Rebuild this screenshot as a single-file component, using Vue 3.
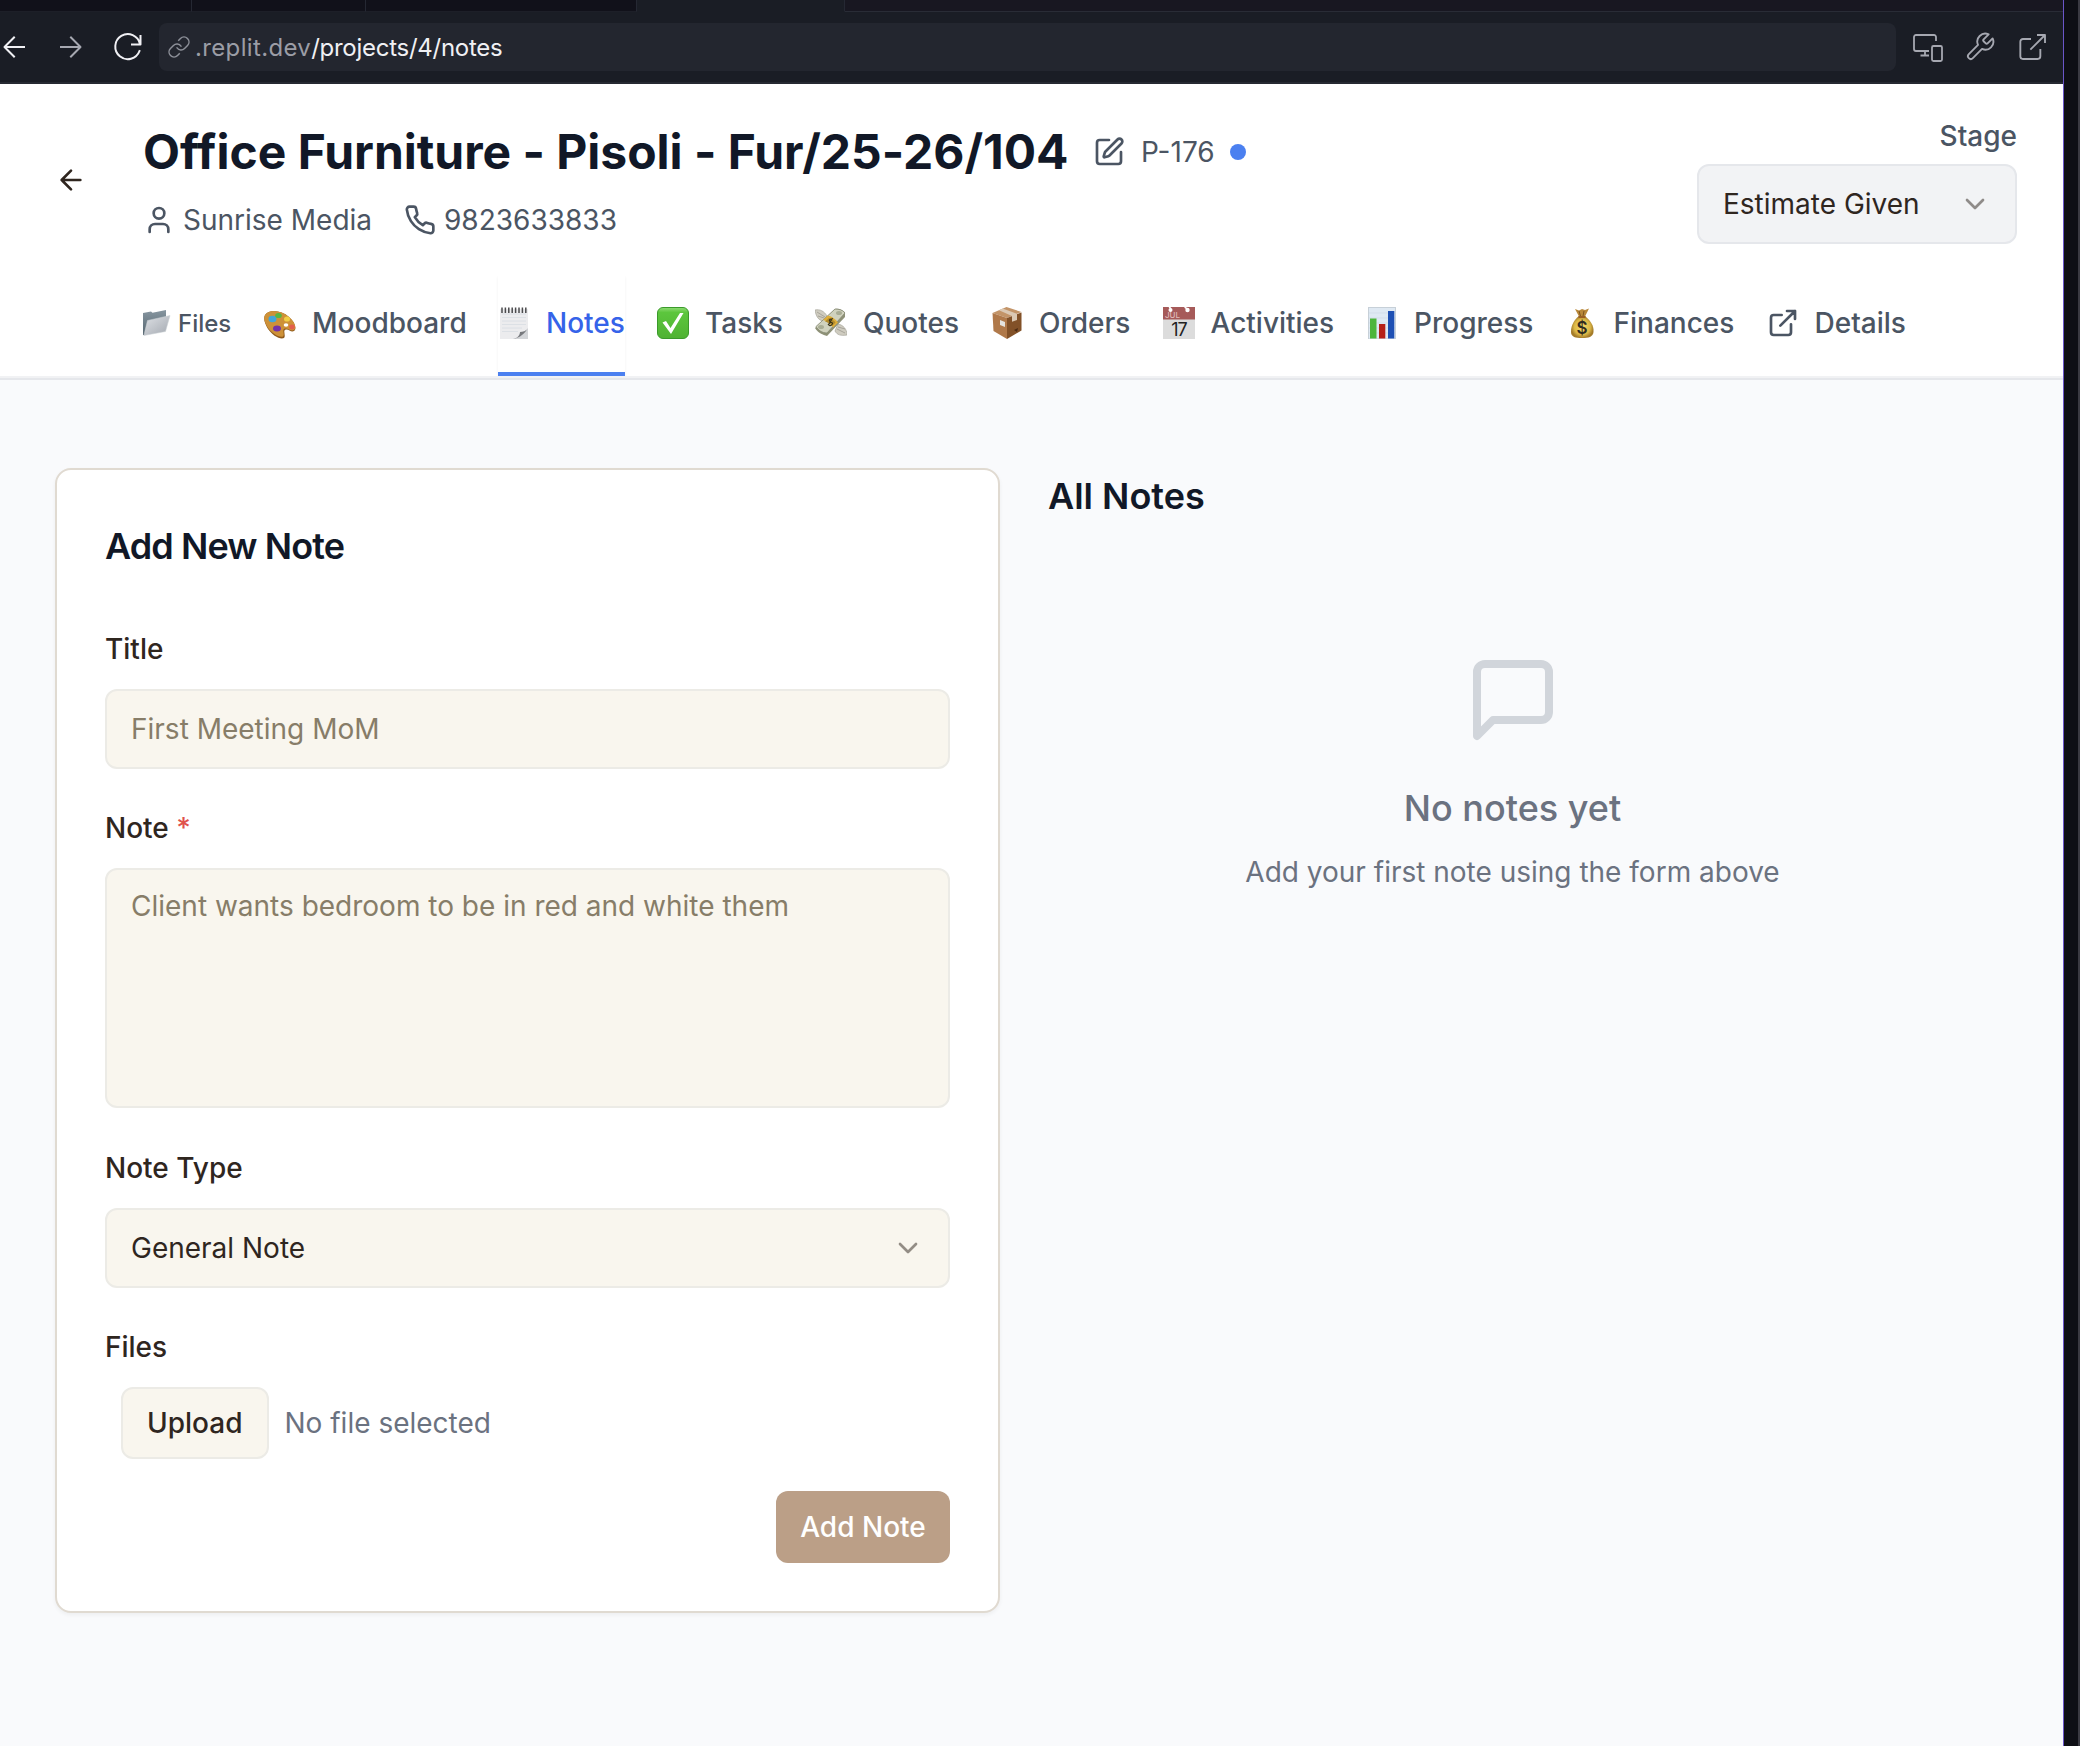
<script setup>
import { ref } from 'vue'

const browserTabs = [192, 174, 271]
const tabs = [
  { id: 'moodboard', label: 'Moodboard', width: 154 },
  { id: 'notes', label: 'Notes', width: 79 },
  { id: 'tasks', label: 'Tasks', width: 78 },
  { id: 'quotes', label: 'Quotes', width: 96 },
  { id: 'orders', label: 'Orders', width: 91.5 },
  { id: 'activities', label: 'Activities', width: 123.5 },
  { id: 'progress', label: 'Progress', width: 119.5 },
  { id: 'finances', label: 'Finances', width: 121 },
  { id: 'details', label: 'Details', width: 92 }
]
const active = ref('notes')
const title = ref('')
const note = ref('')
</script>

<template>
  <div class="screen">
    <div class="pane">
      <div class="strip">
        <div v-for="(w, i) in browserTabs" :key="i" class="strip-tab" :style="{ width: w + 'px' }"></div>
        <div class="strip-tab current"></div>
        <div class="strip-rest"></div>
      </div>
      <div class="toolbar">
        <svg class="nav-back" viewBox="0 0 32 32"><path d="M26 16H7M16 6.500L6.500 16l9.500 9.500" /></svg>
        <svg class="nav-fwd" viewBox="0 0 32 32"><path d="M6 16h19M16 6.500l9.500 9.500-9.500 9.500" /></svg>
        <svg class="nav-reload" viewBox="0 0 32 32"><path d="M28.500 5v8.500h-8.500M28 13A12.500 12.500 0 1 0 27.500 20" /></svg>
        <div class="url">
          <svg viewBox="0 0 24 24"><path d="M10 13a5 5 0 0 0 7.540.540l3-3a5 5 0 0 0-7.070-7.070l-1.720 1.710M14 11a5 5 0 0 0-7.540-.540l-3 3a5 5 0 0 0 7.070 7.070l1.710-1.710" /></svg>
          <span class="url-text"><span class="host">.replit.dev</span>/projects/4/notes</span>
        </div>
        <div class="tools">
          <svg viewBox="0 0 32 32"><path d="M25 10V6a2 2 0 0 0-2-2H5a2 2 0 0 0-2 2v12a2 2 0 0 0 2 2h13M14 20v4M9.500 24.500H18" /><rect x="21" y="15" width="10" height="15" rx="1.500" /></svg>
          <svg viewBox="0 0 24 24"><path d="M14.700 6.300a1 1 0 0 0 0 1.400l1.600 1.600a1 1 0 0 0 1.400 0l3.770-3.770a6 6 0 0 1-7.940 7.940l-6.910 6.910a2.120 2.120 0 0 1-3-3l6.910-6.910a6 6 0 0 1 7.940-7.940l-3.760 3.760z" /></svg>
          <svg viewBox="0 0 24 24"><path d="M15 3h6v6M10 14 21 3M17.500 13.500v5.500a2 2 0 0 1-2 2h-11a2 2 0 0 1-2-2V8a2 2 0 0 1 2-2h6" /></svg>
        </div>
      </div>

      <header class="header">
        <div class="head-row">
          <svg class="ic back" viewBox="0 0 24 24"><path d="m12 19-7-7 7-7M19 12H5" /></svg>
          <div class="head-main">
            <div class="title-row">
              <h1>Office Furniture - Pisoli - Fur/25-26/104</h1>
              <svg class="ic" viewBox="0 0 24 24"><path d="M12 3H5a2 2 0 0 0-2 2v14a2 2 0 0 0 2 2h14a2 2 0 0 0 2-2v-7" /><path d="M18.375 2.625a1 1 0 0 1 3 3l-9.013 9.014a2 2 0 0 1-.853.505l-2.873.840a.500.500 0 0 1-.620-.620l.840-2.873a2 2 0 0 1 .506-.852z" /></svg>
              <span class="code">P-176</span>
              <i class="dot"></i>
            </div>
            <div class="meta">
              <svg class="ic" viewBox="0 0 24 24"><path d="M19 21v-2a4 4 0 0 0-4-4H9a4 4 0 0 0-4 4v2" /><circle cx="12" cy="7" r="4" /></svg>
              <span class="client">Sunrise Media</span>
              <svg class="ic" viewBox="0 0 24 24"><path d="M22 16.920v3a2 2 0 0 1-2.180 2 19.790 19.790 0 0 1-8.630-3.070 19.500 19.500 0 0 1-6-6 19.790 19.790 0 0 1-3.070-8.670A2 2 0 0 1 4.110 2h3a2 2 0 0 1 2 1.720 12.840 12.840 0 0 0 .7 2.810 2 2 0 0 1-.450 2.110L8.090 9.910a16 16 0 0 0 6 6l1.270-1.270a2 2 0 0 1 2.110-.450 12.840 12.840 0 0 0 2.810.7A2 2 0 0 1 22 16.920z" /></svg>
              <span class="phone">9823633833</span>
            </div>
          </div>
          <div class="stage">
            <span class="stage-label">Stage</span>
            <div class="select stage-select">
              <span>Estimate Given</span>
              <svg class="ic chev" viewBox="0 0 24 24"><path d="m6 9 6 6 6-6" /></svg>
            </div>
          </div>
        </div>

        <nav class="tabs">
          <a class="files">
            <svg viewBox="0 0 28 28">
              <defs>
                <linearGradient id="fb" x2="0" y2="1"><stop stop-color="#8796a0" /><stop offset="1" stop-color="#566670" /></linearGradient>
                <linearGradient id="ff" x1="0" y1="0" x2="1" y2="1"><stop stop-color="#dfe2e6" /><stop offset="1" stop-color="#a3a8b0" /></linearGradient>
              </defs>
              <path d="M0 4 8 2.500l1.500 1.200L23 1v11L2 26H0z" fill="url(#fb)" />
              <path d="M4.500 11.500 27 6.500 22.500 22.500 .8 26.500z" fill="url(#ff)" stroke="#c9ced3" stroke-width=".5" />
            </svg>
            <span>Files</span>
          </a>
          <a v-for="t in tabs" :key="t.id" class="tab" :class="{ on: t.id === active }" @click="active = t.id">
            <svg v-if="t.id === 'moodboard'" viewBox="0 0 32 32">
              <path d="M1 8C5 2 17 3 25 10c6 5 8 12 5 14-3 2-6-3-9-1-2 1 1 6-1 8-4 2-12-3-16-9C1 17-1 12 1 8z" fill="#8f5a1c" />
              <path d="M1 8C5 2 17 3 25 10c6 5 8 11 5 13-3 2-7-3-10-1-2 1 1 6-1 7.500C15 31 8 26 4 21 1 16-1 12 1 8z" fill="#cd9138" />
              <ellipse cx="8.500" cy="12" rx="4" ry="3.300" fill="#42a5d8" /><ellipse cx="14.500" cy="8.500" rx="3.300" ry="2.600" fill="#54b743" /><ellipse cx="23" cy="12" rx="3" ry="2.600" fill="#f1cf46" /><ellipse cx="28" cy="20" rx="2.800" ry="2.400" fill="#e35f4c" /><ellipse cx="13" cy="21.500" rx="4" ry="3" fill="#7431a8" /><ellipse cx="22" cy="18" rx="2.300" ry="1.700" fill="#fff" />
            </svg>
            <svg v-else-if="t.id === 'notes'" viewBox="0 0 32 32">
              <path d="M2 2h28v19L20 32H2z" fill="#ececee" /><path d="M4 7h24M4 10.500h24M4 14h24M4 17.500h24M4 21h20M4 24.500h16" stroke="#d8dde2" stroke-width=".8" /><path d="M30 21v11H15c5-1 7-4 7-7 3 0 6-1 8-4z" fill="#d3d5d8" /><path d="M30 21c-2 3-5 4-8 4 0 3-2 6-7 7 7-1 12-6 15-11z" fill="#77797d" />
              <path d="M4 .5v5.500M7.400.5v5.500M10.800.5v5.500M14.200.5v5.500M17.600.5v5.500M21 .5v5.500M24.400.5v5.500M27.800.5v5.500" stroke="#4b4b4d" stroke-width="1.500" />
            </svg>
            <svg v-else-if="t.id === 'tasks'" viewBox="0 0 32 32">
              <defs><linearGradient id="gc" x2="0" y2="1"><stop stop-color="#8fdc74" /><stop offset=".16" stop-color="#5cc63d" /><stop offset="1" stop-color="#4fb233" /></linearGradient></defs>
              <rect x=".5" y=".5" width="31" height="31" rx="5.500" fill="url(#gc)" stroke="#3b9a2b" /><path d="M5.500 15.500 9 14l4.500 7L23 6h3.500L14 27z" fill="#fff" />
            </svg>
            <svg v-else-if="t.id === 'quotes'" viewBox="0 0 32 32">
              <path d="M0 3c5-1 9 1 12 6l-4 5C3 13 1 9 0 3zM32 28c-6 1-10 0-12-4l3-7c5 1 9 5 9 11z" fill="#cfccc0" stroke="#a5a398" stroke-width=".7" /><path d="M2 5l8 5M3 9l6 2M30 26l-8-4M30 22l-7-2" stroke="#96948a" stroke-width=".7" />
              <path d="M0 21 20 2c4-1 8 1 10 4v4L12 29C8 28 3 26 0 21z" fill="#8e9177" /><path d="M1 19.500 20 2c4 0 8 1 10 4L12 26C7 26 3 23 1 19.500z" fill="#d0d2be" stroke="#858972" stroke-width=".8" /><ellipse cx="24" cy="6" rx="3" ry="2" fill="#a9ad95" /><ellipse cx="6" cy="20" rx="3" ry="2" fill="#a9ad95" /><path d="m8 13 5-4.500c4 1 8 4 10 7l-5 5C16 17 12 14 8 13z" fill="#dfae38" /><path d="m10 14.500 4-3.500c3 1 5 2.500 6.500 4.500l-3.500 3.500c-2-2-4-3.500-7-4.500z" fill="#b08a2c" /><path d="M17 12.500c-2-1-3.500.5-2 2s3.500 1 2 3-3 1-4-.5M17.500 11l-4 7" stroke="#3b3415" stroke-width="1.200" fill="none" />
            </svg>
            <svg v-else-if="t.id === 'orders'" viewBox="0 0 32 32">
              <path d="m1.500 6 14-6 15 5L16 11z" fill="#c39468" /><path d="M1.500 6 16 11v21L2.500 24z" fill="#b0794a" /><path d="M16 11 30.500 5.500v18L16 32z" fill="#825128" /><path d="m8 3.200 3.500-1.600L26 6.800V13l-5 1.800V9z" fill="#dbc8b3" /><path d="m9 13 5 2v5l-5-2z" fill="#e5e3df" /><path d="m23 23 4-2-1 4z" fill="#4a2a12" />
            </svg>
            <svg v-else-if="t.id === 'activities'" viewBox="0 0 32 32">
              <rect width="32" height="32" fill="#dcdcdc" /><rect width="32" height="12.500" fill="#a65a59" /><path d="M6 0c2 1 1.500 1.500 1.500 2.500M22 0c0 1 2 1 2.500 2.500" stroke="#fff" stroke-width="1.500" fill="none" /><circle cx="7.500" cy="3" r="2" fill="#fff" /><circle cx="24.500" cy="3" r="2.200" fill="#fff" />
              <text x="2" y="10.500" class="cal-m">JUL</text><text x="16" y="29" text-anchor="middle" class="cal-d">17</text>
            </svg>
            <svg v-else-if="t.id === 'progress'" viewBox="0 0 32 32">
              <rect x="2.500" y=".5" width="27" height="31.500" fill="#dfe9f3" stroke="#c7d0d8" /><path d="M3 6h26M3 11h26M3 16h26M3 21h26M3 26h26" stroke="#ccd9e5" stroke-width=".6" /><rect x="4" y="11.500" width="6.500" height="20" fill="#4db53b" /><rect x="13" y="17" width="6.300" height="14.500" fill="#b62018" /><rect x="22" y="4" width="6.300" height="27.500" fill="#1e50b4" />
            </svg>
            <svg v-else-if="t.id === 'finances'" viewBox="0 0 32 32">
              <defs><radialGradient id="mb"><stop stop-color="#f5dc69" /><stop offset=".7" stop-color="#dcb847" /><stop offset="1" stop-color="#a47b29" /></radialGradient></defs>
              <path d="m9 2 4 1.500L16 2l3 1 4-1.500-4 8h-6z" fill="#b98839" /><path d="m13 4 1.500 5M18 4l-1 5" stroke="#7c5420" /><path d="M13 9h6c6 5 9 10 8.500 16-.5 5-5 6-11.500 6S5 30 5 25C5 18 8 13 13 9z" fill="url(#mb)" /><path d="M12.500 10h7" stroke="#9a5f24" stroke-width="2" />
              <text x="16" y="27" text-anchor="middle" class="bag">$</text>
            </svg>
            <svg v-else class="ic" viewBox="0 0 24 24"><path d="M15 3h6v6M10 14 21 3M18 13v6a2 2 0 0 1-2 2H5a2 2 0 0 1-2-2V8a2 2 0 0 1 2-2h6" /></svg>
            <span :style="{ width: t.width + 'px' }">{{ t.label }}</span>
          </a>
        </nav>
      </header>

      <main class="content">
        <form class="card" @submit.prevent>
          <h2>Add New Note</h2>
          <label>Title</label>
          <input v-model="title" class="field" placeholder="First Meeting MoM" />
          <label>Note <span class="req">*</span></label>
          <textarea v-model="note" class="field area" placeholder="Client wants bedroom to be in red and white them"></textarea>
          <label>Note Type</label>
          <div class="select field">
            <span>General Note</span>
            <svg class="ic chev" viewBox="0 0 24 24"><path d="m6 9 6 6 6-6" /></svg>
          </div>
          <label>Files</label>
          <div class="upload">
            <button type="button">Upload</button>
            <span>No file selected</span>
          </div>
          <button class="submit" type="submit">Add Note</button>
        </form>
        <section class="all">
          <h2>All Notes</h2>
          <div class="empty">
            <svg viewBox="0 0 24 24"><path d="M21 15a2 2 0 0 1-2 2H7l-4 4V5a2 2 0 0 1 2-2h14a2 2 0 0 1 2 2z" /></svg>
            <h3>No notes yet</h3>
            <p>Add your first note using the form above</p>
          </div>
        </section>
      </main>
    </div>
    <div class="gutter"></div>
  </div>
</template>

<style>
body { margin: 0; }
</style>

<style scoped>
* { box-sizing: border-box; }
h1, h2, h3, p { margin: 0; }
svg { display: block; flex: none; }
.screen { width: 2080px; height: 1746px; display: flex; overflow: hidden; background: #0e0f15; font-family: Inter, "Liberation Sans", sans-serif; font-size: 28px; color: #2f261f; }
.pane { width: 2064px; height: 1746px; border-right: 1px solid #6a56c8; background: #f9fafc; display: flex; flex-direction: column; }
.gutter { width: 16px; border-right: 2px solid #3a3a42; background: #0e0f15; }
.strip { height: 12px; display: flex; background: #181721; }
.strip-tab { height: 12px; background: #11111a; border-right: 1px solid #252833; border-bottom: 1px solid #1d1f28; flex: none; }
.strip-tab.current { width: 208px; background: #1a1d25; border-bottom-color: #1a1d25; }
.strip-rest { flex: 1; border-bottom: 1px solid #292c36; }
.toolbar { height: 72px; flex: none; display: flex; align-items: center; background: #1a1d25; border-bottom: 2px solid #262932; }
.toolbar svg { fill: none; stroke: #a6a8b1; stroke-width: 2; stroke-linecap: square; stroke-linejoin: round; width: 32px; height: 32px; }
.toolbar .nav-back { stroke: #f0f0f4; margin-left: -2px; }
.toolbar .nav-fwd { margin-left: 25px; }
.toolbar .nav-reload { stroke: #f0f0f4; margin-left: 25px; }
.url { margin-left: 15px; width: 1737px; height: 48px; border-radius: 8px; background: #23262f; display: flex; align-items: center; padding-left: 8px; color: #f0f0f4; font-size: 24px; letter-spacing: -.27px; }
.url svg { width: 24px; height: 24px; stroke-width: 1.500; stroke: #8d9099; }
.url-text { margin-left: 4px; }
.host { color: #9b9da6; letter-spacing: .35px; }
.tools { display: flex; gap: 21px; margin-left: 15px; }
.toolbar .tools svg { stroke-width: 1.800; stroke-linecap: butt; stroke-linejoin: round; }
.toolbar .tools svg + svg { stroke-width: 1.400; }

.ic { width: 32px; height: 32px; fill: none; stroke: currentColor; stroke-width: 2; stroke-linecap: round; stroke-linejoin: round; }
.header { height: 296px; flex: none; background: #fff; border-bottom: 2px solid #e5e7eb; box-shadow: inset 0 -2px #f1f2f4; display: flex; flex-direction: column; }
.head-row { height: 192px; display: flex; padding-left: 55px; }
.back { margin-top: 80px; }
.head-main { margin-left: 56px; padding-top: 40px; color: #4b5563; }
.title-row { height: 56px; display: flex; align-items: center; }
h1 { width: 925px; font-size: 48px; font-weight: 700; line-height: 56px; letter-spacing: -.02px; color: #111827; white-space: nowrap; }
.title-row .ic { margin-left: 25px; }
.code { margin-left: 16px; width: 73px; white-space: nowrap; }
.dot { width: 16px; height: 16px; border-radius: 50%; background: #4b80f0; margin-left: 16px; }
.meta { height: 40px; margin-top: 20px; display: flex; align-items: center; white-space: nowrap; }
.client { margin-left: 8px; width: 189px; }
.meta .ic + .client + .ic { margin-left: 32px; }
.phone { margin-left: 8px; }
.stage { margin-left: auto; margin-right: 46px; padding-top: 32px; display: flex; flex-direction: column; align-items: flex-end; }
.stage-label { height: 40px; line-height: 40px; font-weight: 500; color: #4b5563; margin-bottom: 8px; }
.select { height: 80px; border: 2px solid #ecebe6; border-radius: 12px; padding: 0 24px; display: flex; justify-content: space-between; align-items: center; }
.chev { opacity: .5; }
.stage-select { width: 320px; background: #f2f3f5; border-color: #e5e7eb; }
.tabs { flex: 1; display: flex; padding-left: 143px; gap: 32px; color: #4b5563; font-weight: 500; }
.tabs a { display: flex; align-items: center; height: 100px; padding-bottom: 6px; white-space: nowrap; }
.files { font-size: 24px; width: 89px; }
.files svg { width: 28px; height: 28px; margin-right: 7px; }
.tab svg { width: 32px; height: 32px; margin-right: 16px; }
.tabs .tab.on { color: #3563e9; border-bottom: 4px solid #4b80f0; padding-bottom: 2px; box-shadow: 0 1px 3px rgba(0, 0, 0, .06); clip-path: inset(0 -2px 0 -2px); }
.cal-m { font: 500 8px Inter, sans-serif; fill: #dfb9b8; }
.cal-d { font: 400 18px Inter, sans-serif; letter-spacing: -1px; fill: #222; }
.bag { font: 600 17px Inter, sans-serif; fill: #2f2b20; }

.content { display: flex; padding: 88px 0 0 55px; }
.card { width: 945px; height: 1145px; background: #fff; border: 2px solid #e0dad1; border-radius: 16px; padding: 48px; display: flex; flex-direction: column; box-shadow: 0 2px 4px rgba(0, 0, 0, .05); }
h2 { font-size: 36px; font-weight: 600; line-height: 56px; letter-spacing: -.9px; color: #111827; white-space: nowrap; }
.card h2 { margin-bottom: 16px; }
label { height: 40px; line-height: 40px; margin: 39px 0 20px; font-weight: 500; flex: none; }
.area + label { margin-top: 40px; }
.req { color: #e0524c; }
.field { display: flex; width: 845px; height: 80px; flex: none; background: #f9f6ee; border: 2px solid #ecebe6; border-radius: 12px; padding: 0 24px; font: 400 28px Inter, sans-serif; color: #2f261f; outline: 0; resize: none; }
.area { height: 240px; padding-top: 16px; line-height: 40px; }
.field::placeholder { color: #877d68; opacity: 1; }
.upload { display: flex; align-items: center; padding-left: 16px; height: 72px; gap: 16px; color: #6b7280; }
button { font: 500 28px Inter, sans-serif; height: 72px; border-radius: 12px; padding: 0; }
.upload button { width: 147.500px; background: #f9f6ee; border: 2px solid #ecebe6; color: #2f261f; }
.submit { align-self: flex-end; width: 174px; margin-top: 32px; border: 0; background: #bb9f87; color: #fff; flex: none; }
.all { margin-left: 48px; width: 929px; }
.all h2 { letter-spacing: 0; }
.empty { display: flex; flex-direction: column; align-items: center; padding-top: 128px; color: #6b7280; white-space: nowrap; }
.empty svg { width: 96px; height: 96px; fill: none; stroke: #d1d5db; stroke-width: 2; stroke-linecap: round; stroke-linejoin: round; }
h3 { font-size: 36px; font-weight: 500; line-height: 56px; margin-top: 32px; }
.empty p { line-height: 40px; margin-top: 16px; }
</style>
